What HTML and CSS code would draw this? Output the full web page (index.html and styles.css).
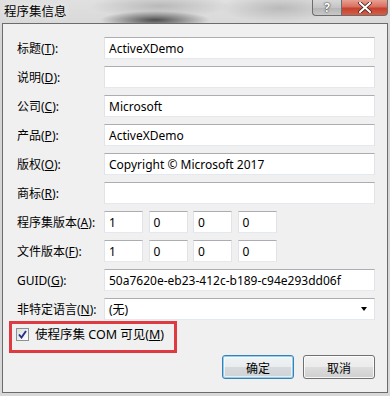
FILE: index.html
```html
<!DOCTYPE html>
<html lang="zh-CN">
<head>
    <meta charset="UTF-8">
    <title>程序集信息</title>
    <link rel="stylesheet" href="styles.css">
</head>
<body>
    <div class="window">
        <!-- Title bar -->
        <div class="titlebar">
            <span class="title">程序集信息</span>
            <div class="caption-buttons">
                <span class="cap-help">?</span>
                <span class="cap-close">
                    <svg width="14" height="11" viewBox="0 0 14 11">
                        <path d="M2 1 L12 10 M12 1 L2 10" stroke="#3a1a14" stroke-width="3.6" stroke-linecap="round"/>
                        <path d="M2 1 L12 10 M12 1 L2 10" stroke="#fff" stroke-width="2.2" stroke-linecap="round"/>
                    </svg>
                </span>
            </div>
        </div>

        <div class="client">
            <div class="form">
                <label>标题(<u>T</u>):</label>
                <div class="field">ActiveXDemo</div>

                <label>说明(<u>D</u>):</label>
                <div class="field"></div>

                <label>公司(<u>C</u>):</label>
                <div class="field">Microsoft</div>

                <label>产品(<u>P</u>):</label>
                <div class="field">ActiveXDemo</div>

                <label>版权(<u>O</u>):</label>
                <div class="field">Copyright © Microsoft 2017</div>

                <label>商标(<u>R</u>):</label>
                <div class="field"></div>

                <label>程序集版本(<u>A</u>):</label>
                <div class="version">
                    <div class="field">1</div>
                    <div class="field">0</div>
                    <div class="field">0</div>
                    <div class="field">0</div>
                </div>

                <label>文件版本(<u>F</u>):</label>
                <div class="version">
                    <div class="field">1</div>
                    <div class="field">0</div>
                    <div class="field">0</div>
                    <div class="field">0</div>
                </div>

                <label>GUID(<u>G</u>):</label>
                <div class="field">50a7620e-eb23-412c-b189-c94e293dd06f</div>

                <label>非特定语言(<u>N</u>):</label>
                <div class="field combo">
                    <span>(无)</span>
                    <span class="arrow"></span>
                </div>
            </div>

            <!-- COM visible checkbox (highlighted) -->
            <div class="highlight">
                <span class="checkbox">
                    <svg width="9" height="9" viewBox="0 0 9 9">
                        <path d="M1 4.5 L3.5 7.5 L8 1" fill="none" stroke="#21308a" stroke-width="1.9"/>
                    </svg>
                </span>
                <span>使程序集 COM 可见(<u>M</u>)</span>
            </div>

            <div class="actions">
                <button class="btn default">确定</button>
                <button class="btn">取消</button>
            </div>
        </div>
    </div>
</body>
</html>
```

FILE: styles.css
```css
/* Window frame */
body {
    margin: 0;
    font-family: "Noto Sans", "Noto Sans CJK SC", sans-serif;
    font-size: 12px;
    color: #000;
}

.window {
    width: 390px;
    height: 396px;
    box-sizing: border-box;
    padding: 0 2px 3px 2px;
    background:
        radial-gradient(ellipse 55px 9px at 155px 20px, rgba(70, 70, 70, 0.95), rgba(70, 70, 70, 0) 100%),
        radial-gradient(ellipse 70px 12px at 160px 6px, rgba(160, 160, 160, 0.6), rgba(160, 160, 160, 0) 100%),
        radial-gradient(ellipse 60px 14px at 280px 8px, rgba(150, 150, 150, 0.5), rgba(150, 150, 150, 0) 100%),
        linear-gradient(180deg, #e0e0e0 0%, #d4d4d4 10%, #d8d8d8 100%);
    display: flex;
    flex-direction: column;
}

.titlebar {
    height: 23px;
    display: flex;
    align-items: flex-start;
    justify-content: space-between;
}

.title {
    padding: 3px 0 0 2px;
    font-family: "Noto Sans CJK SC", sans-serif;
    font-size: 12.5px;
    line-height: 16px;
    color: #000;
    text-shadow: 0 0 6px rgba(255, 255, 255, 0.9);
}

.caption-buttons {
    display: flex;
}

.cap-help,
.cap-close {
    height: 16px;
    box-sizing: border-box;
    display: flex;
    align-items: center;
    justify-content: center;
    border: 1px solid #6d6d6d;
    border-top: none;
}

.cap-help {
    width: 29px;
    border-radius: 0 0 0 4px;
    border-right: none;
    background: linear-gradient(180deg, #d8d8d8 0%, #c4c4c4 50%, #b4b4b4 51%, #c8c8c8 100%);
    color: #fff;
    font-weight: bold;
    font-size: 12px;
    text-shadow: 0 0 2px #333, 0 0 1px #333;
}

.cap-close {
    width: 47px;
    border-radius: 0 0 4px 0;
    background: linear-gradient(180deg, #e8a093 0%, #d9705f 45%, #c4412d 55%, #d4604a 100%);
}

/* Client area */
.client {
    flex: 1;
    background: #f0f0f0;
    border: 1px solid #6c6c6c;
    padding: 13px 12px 0 14px;
}

.form {
    display: grid;
    grid-template-columns: 87px 271px;
    grid-auto-rows: 22px;
    row-gap: 7px;
}

.form label {
    display: flex;
    align-items: center;
    white-space: nowrap;
}

.field {
    background: #fff;
    border: 1px solid #e2e3ea;
    border-top-color: #abadb3;
    border-bottom-color: #e3e9ef;
    box-sizing: border-box;
    height: 22px;
    display: flex;
    align-items: center;
    padding-left: 4px;
    white-space: nowrap;
    overflow: hidden;
}

.version {
    display: grid;
    grid-template-columns: repeat(4, 39px);
    column-gap: 5.5px;
}

.combo {
    justify-content: space-between;
    padding-right: 7px;
}

.arrow {
    width: 0;
    height: 0;
    border-left: 3.5px solid transparent;
    border-right: 3.5px solid transparent;
    border-top: 4px solid #000;
}

/* Checkbox with red annotation box */
.highlight {
    width: 168px;
    height: 32px;
    box-sizing: border-box;
    margin: 1px 0 0 -8px;
    border: 3px solid #df3a42;
    display: flex;
    align-items: flex-start;
    gap: 6px;
    padding: 2px 0 0 4px;
    font-size: 12.5px;
    line-height: 17px;
}

.checkbox {
    width: 13px;
    height: 13px;
    margin-top: 2px;
    box-sizing: border-box;
    border: 1px solid #8e8f8f;
    background: linear-gradient(135deg, #dcdcdc, #ffffff);
    display: flex;
    align-items: center;
    justify-content: center;
}

.actions {
    display: flex;
    justify-content: flex-end;
    gap: 9px;
    margin-top: 2px;
}

.btn {
    width: 72px;
    height: 24px;
    border: 1px solid #707070;
    border-radius: 3px;
    background: linear-gradient(180deg, #f2f2f2 0%, #ebebeb 50%, #dddddd 51%, #cfcfcf 100%);
    font-family: "Noto Sans CJK SC", sans-serif;
    font-size: 12px;
    color: #000;
    padding: 0;
    box-shadow: inset 0 0 0 1px rgba(255, 255, 255, 0.8);
}

.btn.default {
    border-color: #3c7fb1;
    box-shadow: inset 0 0 0 1px #8ed0f2, inset 0 0 0 2px rgba(255, 255, 255, 0.6);
    background: linear-gradient(180deg, #f0f4f6 0%, #e8ecee 50%, #d6dadc 51%, #cfd3d5 100%);
}
```
